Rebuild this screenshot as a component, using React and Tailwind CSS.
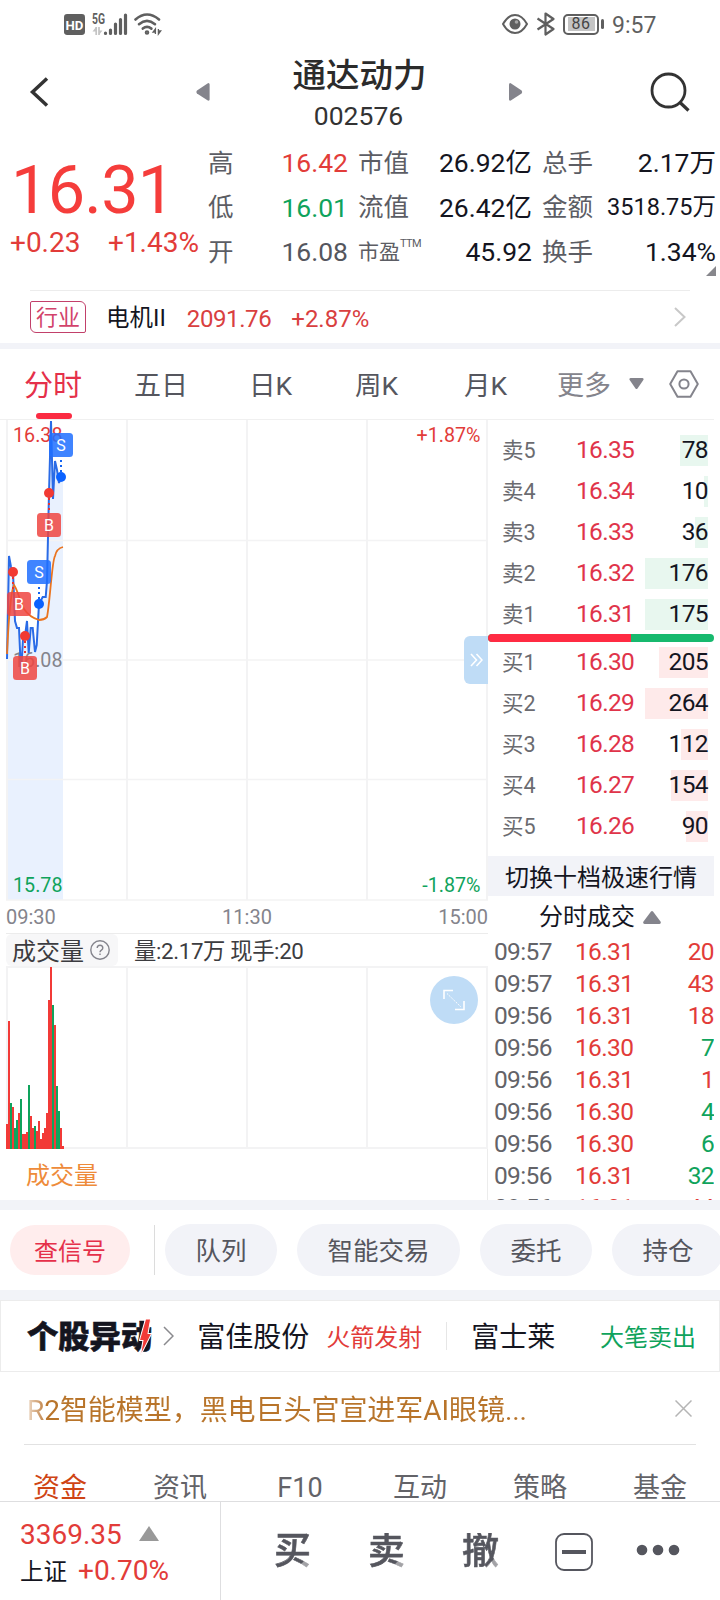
import React from "react";
import clsx from "clsx";

const STATS = [
  [
    { label: "高", value: "16.42", color: "text-[#e23c39]" },
    { label: "市值", value: "26.92亿" },
    { label: "总手", value: "2.17万" },
  ],
  [
    { label: "低", value: "16.01", color: "text-[#0fa35c]" },
    { label: "流值", value: "26.42亿" },
    { label: "金额", value: "3518.75万", small: true },
  ],
  [
    { label: "开", value: "16.08", color: "text-[#55565e]" },
    { label: "市盈", sup: "TTM", value: "45.92" },
    { label: "换手", value: "1.34%" },
  ],
];

const SELLS = [
  { label: "卖5", price: "16.35", amount: 78, bar: 28 },
  { label: "卖4", price: "16.34", amount: 10, bar: 4 },
  { label: "卖3", price: "16.33", amount: 36, bar: 13 },
  { label: "卖2", price: "16.32", amount: 176, bar: 63 },
  { label: "卖1", price: "16.31", amount: 175, bar: 63 },
];

const BUYS = [
  { label: "买1", price: "16.30", amount: 205, bar: 49 },
  { label: "买2", price: "16.29", amount: 264, bar: 63 },
  { label: "买3", price: "16.28", amount: 112, bar: 27 },
  { label: "买4", price: "16.27", amount: 154, bar: 37 },
  { label: "买5", price: "16.26", amount: 90, bar: 22 },
];

const TRADES = [
  { time: "09:57", price: "16.31", amount: 20, up: true },
  { time: "09:57", price: "16.31", amount: 43, up: true },
  { time: "09:56", price: "16.31", amount: 18, up: true },
  { time: "09:56", price: "16.30", amount: 7, up: false },
  { time: "09:56", price: "16.31", amount: 1, up: true },
  { time: "09:56", price: "16.30", amount: 4, up: false },
  { time: "09:56", price: "16.30", amount: 6, up: false },
  { time: "09:56", price: "16.31", amount: 32, up: false },
  { time: "09:56", price: "16.31", amount: 44, up: true },
];

// [height, rising]
const VOLUMES = [
  [25, 1], [128, 1], [46, 0], [42, 1], [21, 0], [29, 0], [36, 1], [50, 0],
  [15, 1], [15, 1], [17, 1], [64, 0], [33, 1], [21, 1], [23, 0], [18, 1],
  [28, 1], [10, 1], [16, 1], [21, 1], [36, 1], [149, 1], [182, 1], [144, 0],
  [124, 1], [63, 0], [38, 0], [21, 1], [3, 1],
];

const PRICE_LINE =
  "1,239 3,136 5,147 7,152 8,177 9,201 11,208 13,208 14,230 15,254 17,219 19,216 21,201 22.7,233 24.7,208 26.7,208 29,232 30.7,225 33,184 36.7,177 39.7,177 41,161 43,73 45,1 47,79 49,41 51,50 53,63 55,57";

const MARKERS = [
  { type: "B", x: 7, y: 152, bx: 1, by: 172 },
  { type: "B", x: 19, y: 216, bx: 7, by: 236 },
  { type: "S", x: 33, y: 184, bx: 21, by: 140 },
  { type: "B", x: 43, y: 73, bx: 31, by: 93 },
  { type: "S", x: 55, y: 57, bx: 43, by: 13 },
];

const StatusBar = () => (
  <div className="flex h-12 items-center pl-16 text-[#5f5f5f]">
    <svg width="21" height="21" viewBox="0 0 20 20">
      <rect width="20" height="20" rx="3" fill="#5f5f5f" />
      <text x="10" y="14.8" textAnchor="middle" fontSize="13" fontWeight="700" fill="#fff" textLength="17" lengthAdjust="spacingAndGlyphs">
        HD
      </text>
    </svg>
    <svg width="36" height="24" viewBox="0 0 36 24" className="ml-[7px]">
      <text x="0" y="11.5" fontSize="14" fontWeight="700" fill="#5f5f5f" textLength="13" lengthAdjust="spacingAndGlyphs">
        5G
      </text>
      <g fill="#c4c4c4">
        <path d="M4.2 15v8M7 15v8" stroke="#c4c4c4" strokeWidth="1.7" />
        <path d="M4 15L.5 19.5H4zM7 23l3.5-4.5H7z" />
      </g>
      <g stroke="#5f5f5f" strokeWidth="3.2" strokeLinecap="round">
        <path d="M13.5 21v.4M18.5 18v3.5M23.5 12v9.5M28.5 7.5v14M33.5 3v18.5" />
      </g>
    </svg>
    <svg width="28" height="24" viewBox="0 0 28 24" className="ml-1.5" fill="none" stroke="#5f5f5f" strokeWidth="2.6" strokeLinecap="round">
      <path d="M1.5 7.5Q13 -2.5 25 7.5" />
      <path d="M5 12.2Q13 5.5 21 12.2" />
      <path d="M8.8 16.6Q13 13.2 17.4 16.6" />
      <circle cx="13" cy="20.5" r="1" />
      <path d="M21.4 22v-5l-2.3 3h2.3M24.4 17v5l2.3-3h-2.3" strokeWidth="1.3" fill="#5f5f5f" strokeLinecap="butt" />
    </svg>
    <svg width="26" height="20" viewBox="0 0 26 20" className="ml-[340px]" fill="none" stroke="#5f5f5f" strokeWidth="2">
      <path d="M1 10Q6 1 13 1T25 10Q20 19 13 19T1 10Z" />
      <circle cx="13" cy="10" r="5.5" fill="#5f5f5f" stroke="none" />
      <circle cx="14.5" cy="8" r="1.8" fill="#a5a5a5" stroke="none" />
    </svg>
    <svg width="20" height="24" viewBox="0 0 20 24" className="ml-2" fill="none" stroke="#5f5f5f" strokeWidth="2.2" strokeLinejoin="round">
      <path d="M1.5 6.5l16 10.5L9.5 22.5v-21L17.5 7l-16 10.5" />
    </svg>
    <div className="ml-[7px] flex h-[21px] w-9 items-center justify-center rounded-[5px] border-2 border-[#5f5f5f]">
      <span className="flex h-[14px] w-[27px] items-center justify-center bg-[#c4c4c4] text-[16px] leading-none tracking-[0.5px] text-[#444]">
        86
      </span>
    </div>
    <span className="ml-0.5 h-2.5 w-[3px] rounded-sm bg-[#5f5f5f]" />
    <span className="ml-2 pt-0.5 text-[23px] leading-none">9:57</span>
  </div>
);

const Header = () => (
  <div className="flex h-[92px] items-center">
    <svg width="20" height="32" viewBox="0 0 20 32" className="-mt-1 ml-[29px]" fill="none" stroke="#333" strokeWidth="3.5">
      <path d="M18 2.5L3.5 16L18 29.5" />
    </svg>
    <svg width="14" height="18" viewBox="0 0 14 18" className="-mt-1 ml-[147px]" fill="#84848c">
      <path d="M12.5 0Q13.6 0 13.6 1.5v15q0 1.5-1.8 1L1 10.5Q-.2 9 1 7.5L11.5 .5z" />
    </svg>
    <div className="mx-auto flex flex-col items-center">
      <h1 className="text-[33.5px] font-medium leading-none text-[#2b2b2b]">通达动力</h1>
      <span className="mr-0.5 mt-[11px] text-[26.5px] leading-none text-[#333]">002576</span>
    </div>
    <svg width="14" height="18" viewBox="0 0 14 18" className="-mt-1 mr-[127px]" fill="#84848c">
      <path d="M1.2 0Q0 0 0 1.5v15q0 1.5 1.8 1L12.6 10.5Q13.8 9 12.6 7.5L2.1 .5z" />
    </svg>
    <svg width="40" height="40" viewBox="0 0 40 40" className="-mt-1 mr-[30px]" fill="none" stroke="#333" strokeWidth="2.8">
      <circle cx="18.5" cy="18.5" r="16.5" />
      <path d="M29.5 30L38.5 38.5" strokeWidth="3.2" />
    </svg>
  </div>
);

const Quote = () => (
  <div className="flex h-[150px]">
    <div className="w-[208px] shrink-0 text-[#e23c39]">
      <div className="mt-4 pl-[11px] text-[66.5px] leading-[69px] tracking-[-0.7px] text-[#f53d3b]">16.31</div>
      <div className="mt-0.5 flex pl-2.5 text-[28px] leading-8">
        <span className="w-[98px]">+0.23</span>
        <span>+1.43%</span>
      </div>
    </div>
    <div className="relative grow pt-px">
      {STATS.map((row, i) => (
        <div key={i} className="grid h-[44.5px] grid-cols-[140px_174px_174px] items-center gap-x-2.5 text-[26.5px] leading-none">
          {row.map((s) => (
            <div key={s.label} className="flex items-center justify-between whitespace-nowrap">
              <span className={clsx("text-[#5c5d64]", s.sup ? "text-[21px]" : "text-[25.5px]")}>
                {s.label}
                {s.sup && <sup className="-top-3 text-[11px] tracking-[-0.6px]">{s.sup}</sup>}
              </span>
              <span className={clsx(s.color || "text-[#14151f]", s.small && "text-[23.5px]")}>{s.value}</span>
            </div>
          ))}
        </div>
      ))}
      <svg width="10" height="10" className="absolute right-1 top-[126px]" fill="#87878c">
        <path d="M10 0v10H0z" />
      </svg>
    </div>
  </div>
);

const Industry = () => (
  <div className="mx-[30px] flex h-[53px] items-center border-t border-[#ececec]">
    <span className="flex h-8 w-14 items-center justify-center rounded-[2px_6px_2px_6px] border border-[#c2406a] pt-0.5 text-[22px] leading-none text-[#d2436b]">
      行业
    </span>
    <span className="ml-5 pt-1 text-[23.5px] leading-none text-[#14151f]">电机II</span>
    <span className="ml-[21px] pt-1 text-[24px] leading-none tracking-[-0.4px] text-[#d9403f]">2091.76</span>
    <span className="ml-5 pt-1 text-[24px] leading-none text-[#d9403f]">+2.87%</span>
    <svg width="12" height="20" viewBox="0 0 12 20" className="ml-auto mr-1" fill="none" stroke="#c8c8c8" strokeWidth="2">
      <path d="M1 1l9.5 9L1 19" />
    </svg>
  </div>
);

const PeriodTabs = () => (
  <div className="mr-1.5 flex h-[71px] items-center border-b border-[#f0f0f0] pl-6 text-[26.5px] leading-none text-[#55565e]">
    <div className="relative flex h-full items-center pt-1 text-[29px] text-[#e5304a]">
      分时
      <span className="absolute bottom-0 left-3 h-1.5 w-9 rounded-sm bg-[#fb2b42]" />
    </div>
    <span className="ml-[52px] w-[115px] pt-[5px] text-[27px]">五日</span>
    <span className="w-[106px] pt-[5px]">日K</span>
    <span className="w-[109px] pt-[5px]">周K</span>
    <span className="w-[93px] pt-[5px]">月K</span>
    <span className="pt-[5px] text-[27px] text-[#84848c]">更多</span>
    <svg width="15" height="12" viewBox="0 0 15 12" className="ml-[18px]" fill="#84848c">
      <path d="M1.5 0h12Q15.5 .5 14 2.5L8.5 10.5Q7.5 11.5 6.5 10.5L1 2.5Q-.5 .5 1.5 0z" />
    </svg>
    <svg width="30" height="28" viewBox="0 0 30 28" className="ml-auto mr-[15px]" fill="none" stroke="#84848c" strokeWidth="2" strokeLinejoin="round">
      <path d="M8.5 1.2h13L28.8 14l-7.3 12.8h-13L1.2 14z" />
      <circle cx="15" cy="14" r="4.6" />
    </svg>
  </div>
);

const PriceChart = () => (
  <div className="relative">
    <svg width="482" height="481" viewBox="0 0 482 481" className="block">
      <polygon points={`${PRICE_LINE} 57,57 57,480 1,480`} fill="#e9f1fe" />
      <g stroke="#f3f3f4" strokeWidth="2">
        <path d="M1 0v480M121 0v480M241 0v480M361 0v480M481 0v480" />
        <path d="M0 120.5h482M0 240h482M0 359.5h482M0 480h482" strokeWidth="1.5" />
      </g>
      <g fontSize="19.7">
        <text x="7" y="22" fill="#e23c39">16.38</text>
        <text x="7" y="247" fill="#84848c">16.08</text>
        <text x="7" y="472" fill="#0fa35c">15.78</text>
        <text x="474.5" y="22" textAnchor="end" fill="#e23c39">+1.87%</text>
        <text x="474.5" y="472" textAnchor="end" fill="#0fa35c">-1.87%</text>
      </g>
      <polyline points={PRICE_LINE} fill="none" stroke="#2a6be6" strokeWidth="2" />
      <path
        d="M1 234C3 190 5 171 8 165C12 171 14 181 18 189C22 195 26 198 33 200Q38 200 41 197C44 182 46 140 49 136C50 131 53 128 57 127"
        fill="none"
        stroke="#ea7420"
        strokeWidth="1.8"
      />
      {MARKERS.map((m, i) => {
        const buy = m.type === "B";
        return (
          <g key={i}>
            <path
              d={`M${m.x} ${m.y}V${buy ? m.by : m.by + 24}`}
              stroke={buy ? "#e8322f" : "#1263f1"}
              strokeWidth="2"
              strokeDasharray="2 3"
            />
            <circle cx={m.x} cy={m.y} r="5" fill={buy ? "#f23a33" : "#0b62ff"} />
            <rect x={m.bx} y={m.by} width="24" height="24" rx="3.5" fill={buy ? "#ee4541" : "#1f6eff"} fillOpacity="0.85" />
            <text x={m.bx + 12} y={m.by + 17.5} textAnchor="middle" fontSize="16" fill="#fff">
              {m.type}
            </text>
          </g>
        );
      })}
    </svg>
    <button className="absolute right-0 top-[216px] flex h-12 w-6 items-center justify-center rounded-l-md bg-[#bfdcf6]">
      <svg width="13" height="14" viewBox="0 0 13 14" fill="none" stroke="#fff" strokeWidth="1.6">
        <path d="M1 1l5.5 6L1 13M6.5 1l5.5 6-5.5 6" />
      </svg>
    </button>
  </div>
);

const VolumeChart = () => (
  <div>
    <div className="flex h-8 items-center text-[24px] leading-none text-[#3c3c40]">
      <div className="flex h-full w-28 items-center rounded-md bg-[#f7f7f8] pl-1.5">
        <span className="pt-1">成交量</span>
        <svg width="20" height="20" viewBox="0 0 20 20" className="ml-1.5" fill="none" stroke="#84848c" strokeWidth="1.4">
          <circle cx="10" cy="10" r="9.2" />
          <path d="M7.2 8q0-2.8 2.8-2.8T12.8 8q0 1.3-1.4 2.2T10 12.2M10 13.5v1.5" />
        </svg>
      </div>
      <span className="ml-4 pt-[3px] text-[22.3px] tracking-[-0.35px]">量:2.17万 现手:20</span>
    </div>
    <div className="relative">
      <svg width="482" height="183" viewBox="0 0 482 183" className="block">
        <path d="M1 0v182M121 0v182M241 0v182M361 0v182M481 0v182M0 1h482M0 182h482" stroke="#f3f3f4" strokeWidth="2" />
        {VOLUMES.map(([h, up], i) => (
          <rect key={i} x={i * 2} y={183 - h} width="2" height={h} fill={up ? "#f23a37" : "#0fa35c"} />
        ))}
      </svg>
      <button className="absolute right-2.5 top-2.5 flex size-12 items-center justify-center rounded-full bg-[#bfdcf6]">
        <svg width="22" height="22" viewBox="0 0 22 22" fill="none" stroke="#fff" strokeWidth="1.6">
          <path d="M1 10V1.5h9M12 20.5h9V12" />
          <path d="M4 4.5l14 13.5" strokeWidth="1" strokeDasharray="1.5 1" />
        </svg>
      </button>
    </div>
    <div className="flex h-[51px] items-center border-r border-[#ececec] pl-5 text-[24px] leading-none text-[#ee8b3a]">
      <span className="pt-[3px]">成交量</span>
    </div>
  </div>
);

const OrderRow = ({ label, price, amount, bar, sell }) => (
  <div className="flex h-[41px] items-center pr-1.5 leading-none">
    <span className="ml-[14px] w-[74px] pt-px text-[21.5px] text-[#6b6b70]">{label}</span>
    <span className="text-[24.5px] tracking-[-0.7px] text-[#e0344a]">{price}</span>
    <div className="relative ml-auto flex h-[31px] items-center">
      <span
        className={clsx("absolute inset-y-0 right-0", sell ? "bg-[#e8f7ef]" : "bg-[#feeaea]")}
        style={{ width: bar }}
      />
      <span className="relative text-[24.5px] tracking-[-0.6px] text-[#14151f]">{amount}</span>
    </div>
  </div>
);

const OrderBook = () => (
  <div className="flex w-[226px] flex-col">
    <div className="pt-2.5">
      {SELLS.map((o) => (
        <OrderRow key={o.label} {...o} sell />
      ))}
    </div>
    <div className="-mt-px flex h-2 overflow-hidden rounded-full bg-[#17b96e]">
      <span className="w-[143px] bg-[#ff2b43]" />
    </div>
    {BUYS.map((o) => (
      <OrderRow key={o.label} {...o} />
    ))}
    <div className="mt-[9px] flex h-10 items-center justify-center bg-[#f2f3f8] pt-[3px] text-[24px] leading-none text-[#14151f]">
      切换十档极速行情
    </div>
    <div className="flex h-10 items-center justify-center pr-0.5 pt-0.5 text-[24px] leading-none text-[#14151f]">
      分时成交
      <svg width="18" height="13" viewBox="0 0 18 13" className="ml-2" fill="#84848c">
        <path d="M8 .5q1-1 2 0l7.5 10q1 2-1 2.5h-15q-2-.5-1-2.5z" />
      </svg>
    </div>
    <div className="h-[264px] overflow-hidden">
      {TRADES.map((t, i) => (
        <div key={i} className="flex h-8 items-center pl-1.5 text-[24.5px] leading-none tracking-[-0.65px] text-[#e23c39]">
          <span className="w-[81px] text-[#636368]">{t.time}</span>
          <span>{t.price}</span>
          <span className={clsx("ml-auto", !t.up && "text-[#0fa35c]")}>{t.amount}</span>
        </div>
      ))}
    </div>
  </div>
);

const Chips = () => (
  <div className="flex h-20 items-center overflow-hidden pl-2.5 text-[25.5px] leading-none text-[#55565e]">
    <span className="flex h-[50px] w-[120px] shrink-0 items-center justify-center rounded-full bg-[#ffeded] pt-[3px] text-[24px] text-[#e5304a]">
      查信号
    </span>
    <span className="ml-6 mr-2.5 h-[50px] w-px shrink-0 bg-[#dcdcdc]" />
    <div className="flex shrink-0 gap-5">
      {["队列", "智能交易", "委托", "持仓"].map((c) => (
        <span key={c} className="flex h-[52px] items-center rounded-full bg-[#f2f3f8] px-[30.5px] pt-1">
          {c}
        </span>
      ))}
    </div>
  </div>
);

const Movers = () => (
  <div className="flex h-[72px] items-center border border-[#ececec] pl-[26px] text-[28px] leading-none text-[#14151f]">
    <div className="relative pt-[3px] text-[31.3px] font-black [-webkit-text-stroke:0.6px_#14151f]">
      个股异动
      <svg width="13" height="37" viewBox="0 0 12 36" className="absolute right-0 top-0">
        <path d="M6 0h5L8.500 14H12L1 36l2.500-15H0z" fill="#f23a37" stroke="#fff" strokeWidth="1" />
      </svg>
    </div>
    <svg width="11" height="20" viewBox="0 0 11 20" className="ml-[11px]" fill="none" stroke="#8a8a8e" strokeWidth="1.5">
      <path d="M1 1l9 9-9 9" />
    </svg>
    <span className="ml-[23px] pt-1">富佳股份</span>
    <span className="ml-[17px] pt-1 text-[24px] text-[#e23c39]">火箭发射</span>
    <span className="ml-6 h-7 w-px bg-[#e6e6e6]" />
    <span className="ml-6 pt-1">富士莱</span>
    <span className="ml-auto mr-[23px] pt-1 text-[24px] text-[#0fa35c]">大笔卖出</span>
  </div>
);

const News = () => (
  <div className="mx-6 flex h-[73px] items-center border-b border-[#e2e2e2] pl-[3px] pr-1">
    <p className="mt-1.5 bg-gradient-to-r from-[#eedcc9] via-[#b8742a] via-4% to-[#b8742a] bg-clip-text text-[28px] leading-9 tracking-[-0.05px] text-transparent">
      R2智能模型，黑电巨头官宣进军AI眼镜...
    </p>
    <svg width="17" height="17" viewBox="0 0 17 17" className="ml-auto" fill="none" stroke="#b5b5b5" strokeWidth="1.5">
      <path d="M.5 .5l16 16M16.5 .5l-16 16" />
    </svg>
  </div>
);

// Trade glyph, the last stroke fades to grey
const TradeButton = ({ children }) => (
  <span className="bg-[linear-gradient(135deg,#55565e_78%,#a2a2a6_79%)] bg-clip-text text-transparent [-webkit-text-stroke:0.6px_transparent]">
    {children}
  </span>
);

const BottomBar = () => (
  <div className="flex h-[99px] border-t border-[#dedee0]">
    <div className="w-[221px] border-r border-[#dedee0] pl-5 pt-[17px] leading-none text-[#e23c39]">
      <div className="flex h-8 items-center text-[28px]">
        3369.35
        <svg width="20" height="15" className="-mt-1 ml-[17px]" fill="#999">
          <path d="M10 0l10 15H0z" />
        </svg>
      </div>
      <div className="mt-0.5 flex h-9 items-center text-[28px]">
        <span className="pt-1 text-[23.5px] text-[#14151f]">上证</span>
        <span className="ml-[11px]">+0.70%</span>
      </div>
    </div>
    <div className="flex grow items-center pt-px text-[37px] font-medium leading-none">
      <div className="ml-[53px] flex gap-[57px]">
        <TradeButton>买</TradeButton>
        <TradeButton>卖</TradeButton>
        <TradeButton>撤</TradeButton>
      </div>
      <svg width="38" height="38" viewBox="0 0 38 38" className="ml-14" fill="none" stroke="#55565e">
        <rect x="1" y="1" width="36" height="36" rx="8" strokeWidth="1.8" />
        <path d="M7 19h24" strokeWidth="4" />
      </svg>
      <svg width="44" height="12" viewBox="0 0 44 12" className="-mt-1 ml-[43px]" fill="#55565e">
        <circle cx="6" cy="6" r="5.3" />
        <circle cx="22" cy="6" r="5.3" />
        <circle cx="38" cy="6" r="5.3" />
      </svg>
    </div>
  </div>
);

const App = () => {
  return (
    <div className="h-[1600px] w-[720px] overflow-hidden bg-white font-['Roboto','Noto_Sans_CJK_SC',sans-serif]">
      <StatusBar />
      <Header />
      <Quote />
      <Industry />
      <div className="h-1.5 bg-[#f2f3f8]" />
      <PeriodTabs />

      <div className="flex h-[780px] pl-1.5">
        <div className="w-[482px]">
          <PriceChart />
          <div className="flex h-[33px] items-center justify-between border-b border-[#ececec] text-[20px] leading-none text-[#84848c]">
            <span>09:30</span>
            <span>11:30</span>
            <span>15:00</span>
          </div>
          <VolumeChart />
        </div>
        <OrderBook />
      </div>

      <div className="h-2.5 bg-[#f2f3f8]" />
      <Chips />
      <div className="h-2.5 bg-[#f2f3f8]" />
      <Movers />
      <News />

      {/* Section tabs, partly covered by the bottom bar */}
      <div className="grid h-14 grid-cols-6 overflow-hidden pt-7 text-center text-[27px] leading-[30px] text-[#636368]">
        <span className="text-[#cf4515]">资金</span>
        <span>资讯</span>
        <span>F10</span>
        <span>互动</span>
        <span>策略</span>
        <span>基金</span>
      </div>
      <BottomBar />
    </div>
  );
};

export default App;
